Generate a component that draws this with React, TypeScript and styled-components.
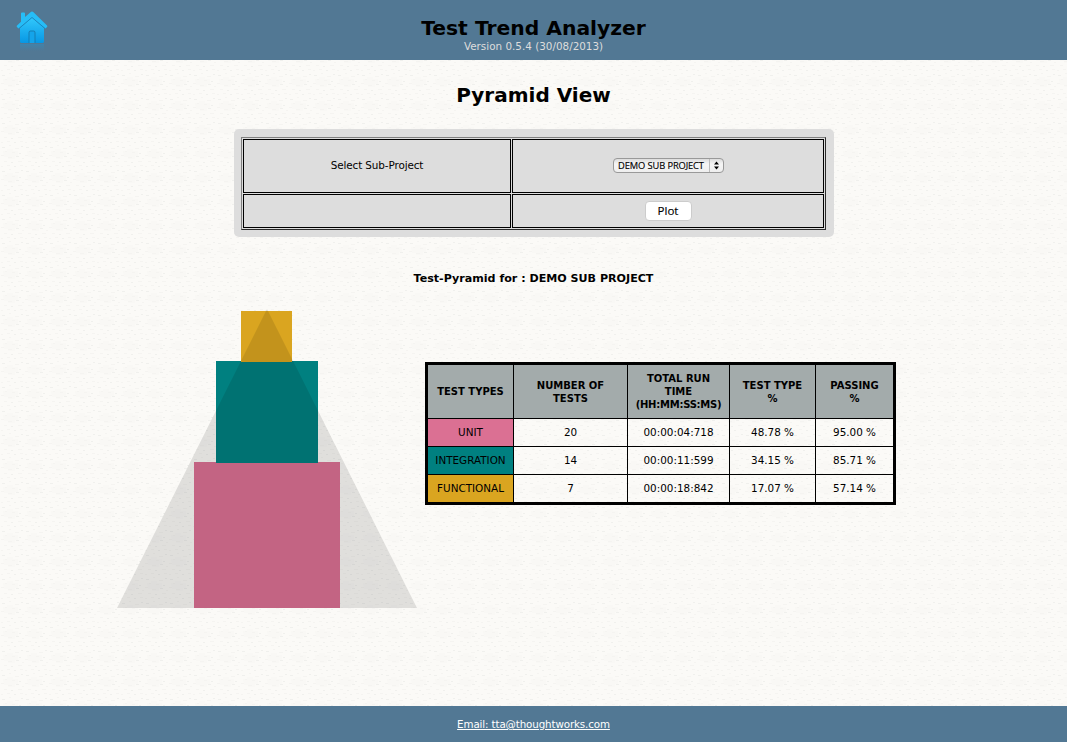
import React from "react";
import styled, { createGlobalStyle } from "styled-components";

const marks: [number, number, number][] = [
  [2, 3, 3], [9, 1, 2], [15, 4, 4], [21, 2, 2], [5, 7, 2], [12, 8, 3], [19, 9, 2],
  [1, 11, 3], [8, 13, 4], [16, 12, 3], [22, 14, 2], [4, 17, 3], [11, 18, 2], [18, 17, 4],
  [7, 21, 3], [14, 22, 2], [20, 21, 3], [1, 22, 2],
];
const paper = encodeURIComponent(
  `<svg xmlns="http://www.w3.org/2000/svg" width="24" height="24">` +
    `<path d="M3 7h4V5h6v2h5v5h-3v3H8v-2H4z" fill="#f9f8f5"/>` +
    marks.map(([x, y, w], i) => `<rect x="${x}" y="${y}" width="${w}" height="1" fill="${i % 3 ? "#f5f4f1" : "#f0f0ed"}"/>`).join("") +
    `</svg>`
);

const GlobalStyle = createGlobalStyle`
  * { box-sizing: border-box; }
  body {
    margin: 0;
    color: #000;
    font: 10.4px/13px Verdana, "DejaVu Sans", sans-serif;
    background: #fbfaf7 url("data:image/svg+xml,${paper}");
  }
`;

const Page = styled.div`
  display: flex;
  flex-direction: column;
  height: 742px;
`;
const Header = styled.header`
  display: grid;
  grid-template-columns: 60px 1fr 60px;
  height: 60px;
  background: #527894;
  text-align: center;
`;
const HomeLink = styled.a`
  padding: 11px 0 0 16px;
  svg { display: block; }
`;
const Title = styled.h1`
  margin: 15px 0 0;
  font-size: 20.3px;
  line-height: 26px;
`;
const Version = styled.div`
  line-height: 12px;
  margin-top: -1px;
  color: #ddd;
`;
const Main = styled.main`
  flex: 1;
  text-align: center;
`;
const Heading = styled.h2`
  margin: 22px 0 0;
  font-size: 20px;
  line-height: 26px;
`;
const Panel = styled.section`
  width: 600px;
  height: 108px;
  margin: 21px 0 0 234px;
  padding: 8px 7px 7px;
  border-radius: 5px;
  background: #ddd;
`;
const FormGrid = styled.div`
  display: grid;
  grid-template-columns: 268px 312px;
  grid-template-rows: 54px 34px;
  gap: 1px;
  width: 585px;
  height: 93px;
  padding: 1px;
  border: 1px solid;
  border-color: #808080 #2b2b2b #2b2b2b #808080;
`;
const FormCell = styled.div`
  display: flex;
  align-items: center;
  justify-content: center;
  padding-bottom: 1px;
  border: 1px solid #000;
  letter-spacing: -0.1px;
`;
const Picker = styled.button`
  display: flex;
  align-items: center;
  width: 111px;
  height: 15px;
  padding: 0;
  border: 1px solid #999;
  border-radius: 4px;
  background: linear-gradient(#ddd, #f5f5f5 40%, #eee);
  color: #000;
  font: 9.3px/12px "Open Sans", sans-serif;
  letter-spacing: -0.1px;
  white-space: nowrap;
  -webkit-text-stroke: 0.15px #000;
`;
const PickerText = styled.span`
  flex: 1;
`;
const Arrows = styled.span`
  width: 14px;
  height: 13px;
  border-left: 1px solid #bbb;
  svg { display: block; }
`;
const Plot = styled.button`
  width: 47px;
  height: 20px;
  padding: 0;
  border: 1px solid #ccc;
  border-radius: 4px;
  background: #fff;
  color: #000;
  font: 11.5px/16px "Open Sans", sans-serif;
  -webkit-text-stroke: 0.15px #000;
`;
const Caption = styled.h3`
  margin: 35px 0 0;
  font-size: 11.1px;
  line-height: 14px;
`;
const Results = styled.section`
  display: flex;
  align-items: flex-start;
  padding: 23px 0 0 117px;
`;
const Pyramid = styled.svg`
  display: block;
  width: 300px;
  height: 300px;
`;
const DataTable = styled.table`
  width: 471px;
  height: 143px;
  margin: 53px 0 0 8px;
  border: 3px solid #000;
  border-collapse: separate;
  border-spacing: 0;
  table-layout: fixed;
`;
const Th = styled.th<{ $w: number }>`
  width: ${(p) => p.$w}px;
  height: 54px;
  padding: 0 4px;
  border: solid #000;
  border-width: 0 1px 1px 0;
  background: #a3abab;
  font-size: 10px;
  white-space: pre-line;
  &:last-child { border-right: 0; }
`;
const Narrow = styled.span`
  letter-spacing: -0.25px;
`;
const Td = styled.td<{ $bg?: string }>`
  height: 28px;
  padding: 0;
  border: solid #000;
  border-width: 0 1px 1px 0;
  background: ${(p) => p.$bg ?? "transparent"};
  &:last-child { border-right: 0; }
  tr:last-child & { border-bottom: 0; height: 27px; }
`;
const Footer = styled.footer`
  height: 36px;
  padding-top: 12px;
  background: #527894;
  text-align: center;
`;
const Mail = styled.a`
  color: #fff;
  font-size: 10.3px;
  letter-spacing: -0.12px;
  text-decoration: underline;
`;

const columns: [React.ReactNode, number][] = [
  ["TEST TYPES", 86],
  ["NUMBER OF\nTESTS", 114],
  [<>{"TOTAL RUN\nTIME\n"}<Narrow>(HH:MM:SS:MS)</Narrow></>, 102],
  ["TEST TYPE\n%", 86],
  ["PASSING\n%", 77],
];
const rows = [
  { color: "#db7093", cells: ["UNIT", "20", "00:00:04:718", "48.78 %", "95.00 %"] },
  { color: "#008080", cells: ["INTEGRATION", "14", "00:00:11:599", "34.15 %", "85.71 %"] },
  { color: "#daa520", cells: ["FUNCTIONAL", "7", "00:00:18:842", "17.07 %", "57.14 %"] },
];

const HomeIcon = () => (
  <svg width="32" height="40" viewBox="0 0 32 40">
    <defs>
      <linearGradient id="house" x2="0" y2="1">
        <stop stopColor="#32c8fc" />
        <stop offset="1" stopColor="#0797e4" />
      </linearGradient>
      <linearGradient id="shine" x2="0" y2="1">
        <stop stopColor="#169ce0" stopOpacity=".3" />
        <stop offset="1" stopColor="#169ce0" stopOpacity="0" />
      </linearGradient>
    </defs>
    <path d="M4 17 16 6.500 28 17V30.500q0 1.500-1.500 1.500H19V21.500q0-1.500-1.500-1.500h-3q-1.500 0-1.500 1.500V32H5.500Q4 32 4 30.500z" fill="url(#house)" />
    <path d="M13 32V21.500q0-1.500 1.500-1.500h3q1.500 0 1.500 1.500V32" fill="#14a4ea" stroke="#1578ad" strokeWidth=".9" />
    <path d="M5 2.500q0-1 1-1h2q1 0 1 1V6l5.500-4.800q1.500-1.200 3 0L31 14.500q.8.800 0 1.600l-1 1q-.8.700-1.600 0L16 6.500 3.600 17.100q-.8.700-1.600 0l-1-1q-.8-.8 0-1.600L5 10.800z" fill="#26bdf7" />
    <path d="M2.800 17.600 16 6.500l13.200 11.100" fill="none" stroke="#1584bf" strokeWidth=".9" />
    <path d="M4 33h24v7H4z" fill="url(#shine)" />
  </svg>
);

export default function App() {
  return (
    <Page>
      <GlobalStyle />
      <Header>
        <HomeLink aria-label="Home"><HomeIcon /></HomeLink>
        <div>
          <Title>Test Trend Analyzer</Title>
          <Version>Version 0.5.4 (30/08/2013)</Version>
        </div>
      </Header>
      <Main>
        <Heading>Pyramid View</Heading>
        <Panel>
          <FormGrid>
            <FormCell>Select Sub-Project</FormCell>
            <FormCell>
              <Picker>
                <PickerText>DEMO SUB PROJECT</PickerText>
                <Arrows>
                  <svg width="13" height="13"><path d="M4 5.500 6.500 2.500 9 5.500zM4 7.500h5L6.500 10.500z" /></svg>
                </Arrows>
              </Picker>
            </FormCell>
            <FormCell />
            <FormCell><Plot>Plot</Plot></FormCell>
          </FormGrid>
        </Panel>
        <Caption>Test-Pyramid for : DEMO SUB PROJECT</Caption>
        <Results>
          <Pyramid viewBox="0 0 300 300">
            <g shapeRendering="crispEdges">
              <path d="M77 153h146v146H77z" fill="#db7093" />
              <path d="M99 52h102v102H99z" fill="#008080" />
              <path d="M124 2h51v51h-51z" fill="#daa520" />
            </g>
            <path d="M150 0 300 299H0z" fill="#000" fillOpacity=".105" />
          </Pyramid>
          <DataTable>
            <thead>
              <tr>{columns.map(([label, w], i) => <Th key={i} $w={w}>{label}</Th>)}</tr>
            </thead>
            <tbody>
              {rows.map((r) => (
                <tr key={r.color}>
                  {r.cells.map((c, i) => <Td key={i} $bg={i === 0 ? r.color : undefined}>{c}</Td>)}
                </tr>
              ))}
            </tbody>
          </DataTable>
        </Results>
      </Main>
      <Footer><Mail href="#">Email: tta@thoughtworks.com</Mail></Footer>
    </Page>
  );
}
